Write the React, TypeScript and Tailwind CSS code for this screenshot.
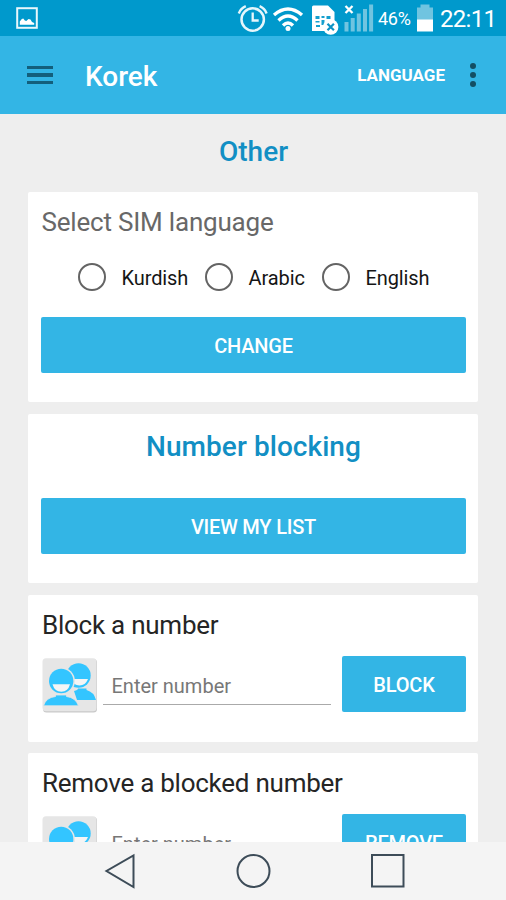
import React from "react";

function StatusBar() {
  return (
    <header className="flex h-9 shrink-0 items-center bg-[#0099cc] text-white">
      <svg className="ml-4 shrink-0" width="22" height="22" viewBox="0 0 22 22" fill="none">
        <rect x="1.2" y="1.2" width="19.6" height="19.6" stroke="#e8f7fc" strokeWidth="2" />
        <path d="M3.800 17.800v-3.300l2-2.500 1.500-.5 1.500 2 1.500.5 2.200-2 2 .5 1.500 2.500 2.200 1v1.800z" fill="#fff" />
      </svg>
      <svg className="ml-[199px] shrink-0" width="144" height="36" viewBox="0 0 144 36" fill="none">
        <g stroke="#e6f6fb" strokeWidth="2.500">
          <circle cx="15.700" cy="19.500" r="11.200" />
          <path d="M15.700 12.500v8h6" strokeWidth="2.300" />
          <path d="M1.800 13.500q1.700-5 7-7.300M29.600 13.500q-1.700-5-7-7.300" strokeWidth="2.400" />
        </g>
        <g stroke="#fff" strokeWidth="3.400">
          <path d="M37 15Q51 3 65 15" />
          <path d="M41.500 20.500Q51 11.500 60.500 20.500" />
          <path d="M46 25.500Q51 20.500 56 25.500" />
        </g>
        <circle cx="51" cy="28.600" r="2.500" fill="#fff" />
        <path d="M76.500 5.500H91l6.500 6.500v19H75V7q0-1.500 1.500-1.500z" fill="#fff" />
        <path d="M78.500 16h4v3h-4zM84.500 16h3v2h-3zM89.500 16h4v3h-4zM78.500 21h4v1.500h-4zM79 25h4v2h-4zM84.500 20h3v5h-3z" fill="#159fce" />
        <circle cx="93.700" cy="27" r="7.700" fill="#fff" />
        <path d="M90.500 23.800l6.400 6.400M96.900 23.800l-6.400 6.400" stroke="#0d93c5" strokeWidth="2.200" />
        <path d="M108.500 6l7 7M115.500 6l-7 7" stroke="#fff" strokeWidth="2.300" />
        <g fill="#70c4e0">
          <rect x="107.500" y="22" width="4" height="9.500" />
          <rect x="113.700" y="18" width="4" height="13.500" />
          <rect x="119.800" y="13.500" width="4" height="18" />
          <rect x="126" y="9" width="4" height="22.500" />
          <rect x="132.100" y="4.500" width="4" height="27" />
        </g>
      </svg>
      <span className="-ml-[3px] w-[35px] whitespace-nowrap pt-px text-[18px] leading-9 tracking-[-0.3px]">46%</span>
      <svg className="ml-[3px] shrink-0" width="18" height="36" viewBox="0 0 18 36">
        <path d="M4.500 4.500h9v3H17V20H1V7.500h3.500z" fill="#70c4e0" />
        <path d="M1 19.500h16V31.500H1z" fill="#fff" />
      </svg>
      <span className="ml-[6px] whitespace-nowrap pt-[2px] text-[24px] leading-8 tracking-[-0.7px]">22:11</span>
    </header>
  );
}

function AppBar() {
  return (
    <div className="flex h-[78px] shrink-0 items-center bg-[#33b5e5] text-white">
      <div className="ml-[27px] flex w-[26px] flex-col gap-1">
        <i className="h-[3.500px] bg-[#135f7c]" />
        <i className="h-[3.500px] bg-[#135f7c]" />
        <i className="h-[3.500px] bg-[#135f7c]" />
      </div>
      <h1 className="ml-[32px] pt-[3px] text-[28px] font-medium leading-9">Korek</h1>
      <span className="ml-auto mr-[25px] text-[17px] font-bold leading-6">LANGUAGE</span>
      <div className="mr-[30px] flex w-[6px] flex-col gap-[3px]">
        <i className="size-[6px] rounded-full bg-[#134e64]" />
        <i className="size-[6px] rounded-full bg-[#134e64]" />
        <i className="size-[6px] rounded-full bg-[#134e64]" />
      </div>
    </div>
  );
}

function Action({ children, className = "w-full" }: { children: React.ReactNode; className?: string }) {
  return (
    <button className={`h-14 shrink-0 rounded-[2px] bg-[#33b5e5] pt-[2px] text-[20px] font-medium tracking-[-0.2px] text-white ${className}`}>
      {children}
    </button>
  );
}

function Language({ name, className }: { name: string; className: string }) {
  return (
    <label className={`flex shrink-0 items-center gap-[16px] ${className}`}>
      <i className="size-[28px] shrink-0 rounded-full border-[2.500px] border-[#646464]" />
      <span className="whitespace-nowrap pt-px text-[20px] leading-7 tracking-[-0.1px] text-[#151515]">{name}</span>
    </label>
  );
}

function ContactsIcon() {
  return (
    <svg className="size-[57px] shrink-0" viewBox="0 0 57 57">
      <rect x="2" y="3" width="54" height="53.500" rx="3.500" fill="#c9c9c9" />
      <rect x="1.500" y="2.300" width="54" height="53" rx="3.500" fill="#e6e6e6" />
      <circle cx="37.500" cy="19.500" r="12.200" fill="#33c5ff" />
      <path d="M30 23h17q-2.500 6.500-8.500 6.500T30 23z" fill="#f5f5f5" />
      <path d="M33 35q4-1 4-2.500h8.500v1.500q7.500 2 9.500 10H36z" fill="#33c5ff" />
      <circle cx="20.200" cy="25" r="13.700" fill="#e6e6e6" />
      <circle cx="20.200" cy="25" r="12.200" fill="#33c5ff" />
      <path d="M11.500 28.300h17.500q-2 7.500-8.700 7.500t-8.800-7.500z" fill="#f5f5f5" />
      <path d="M2.500 49.800Q5 41.500 14.500 40.500v-1.500h11v1.500q9 1 12 9.300z" fill="#33c5ff" stroke="#e6e6e6" strokeWidth=".8" />
    </svg>
  );
}

function NumberCard({ title, action }: { title: string; action: string }) {
  return (
    <section className="h-[147px] shrink-0 rounded-[2px] bg-white px-[13px] pt-[14px]">
      <h2 className="h-8 whitespace-nowrap pl-px text-[26px] leading-8 tracking-[-0.25px] text-[#252525]">{title}</h2>
      <div className="mt-[15px] flex">
        <ContactsIcon />
        <div className="ml-[5px] h-[49px] w-[228px] shrink-0 border-b-[1.500px] border-[#aaa] pl-[8.500px] pt-[14px] text-[20px] leading-8 text-[#777]">
          Enter number
        </div>
        <Action className="ml-[11px] w-[124px]">{action}</Action>
      </div>
    </section>
  );
}

export default function App() {
  return (
    <div className="flex h-[900px] w-[506px] flex-col overflow-hidden bg-[#eee] font-[Roboto,sans-serif]">
      <StatusBar />
      <AppBar />
      <main className="flex min-h-0 flex-1 flex-col gap-[12px] overflow-hidden px-7">
        <h2 className="h-[66px] shrink-0 pl-px pt-[20px] text-center text-[28px] font-medium leading-9 text-[#128fc4]">Other</h2>
        <section className="h-[210px] shrink-0 rounded-[2px] bg-white pl-[13px] pr-[12px] pt-[14px]">
          <h2 className="h-8 whitespace-nowrap pl-[0.500px] text-[26px] leading-8 tracking-[-0.2px] text-[#686868]">Select SIM language</h2>
          <div className="mb-[26px] mt-[25px] flex h-7 pl-[36.500px]">
            <Language name="Kurdish" className="w-[127px]" />
            <Language name="Arabic" className="w-[117px]" />
            <Language name="English" className="w-[120px]" />
          </div>
          <Action>CHANGE</Action>
        </section>
        <section className="h-[169px] shrink-0 rounded-[2px] bg-white pl-[13px] pr-[12px] pt-[15px]">
          <h2 className="mb-[33px] text-center text-[28px] font-medium leading-9 tracking-[0.060px] text-[#128fc4]">Number blocking</h2>
          <Action>VIEW MY LIST</Action>
        </section>
        <NumberCard title="Block a number" action="BLOCK" />
        <div className="-mt-px flex flex-col">
          <NumberCard title="Remove a blocked number" action="REMOVE" />
        </div>
      </main>
      <nav className="h-[58px] shrink-0 bg-[#f4f4f4]">
        <svg width="506" height="58" viewBox="0 0 506 58" fill="none" stroke="#3d4c58" strokeWidth="2">
          <path d="M133.500 13.500v31.500L106.500 29z" />
          <circle cx="253.500" cy="29" r="16" />
          <rect x="372" y="13" width="31.500" height="31.500" />
        </svg>
      </nav>
    </div>
  );
}
